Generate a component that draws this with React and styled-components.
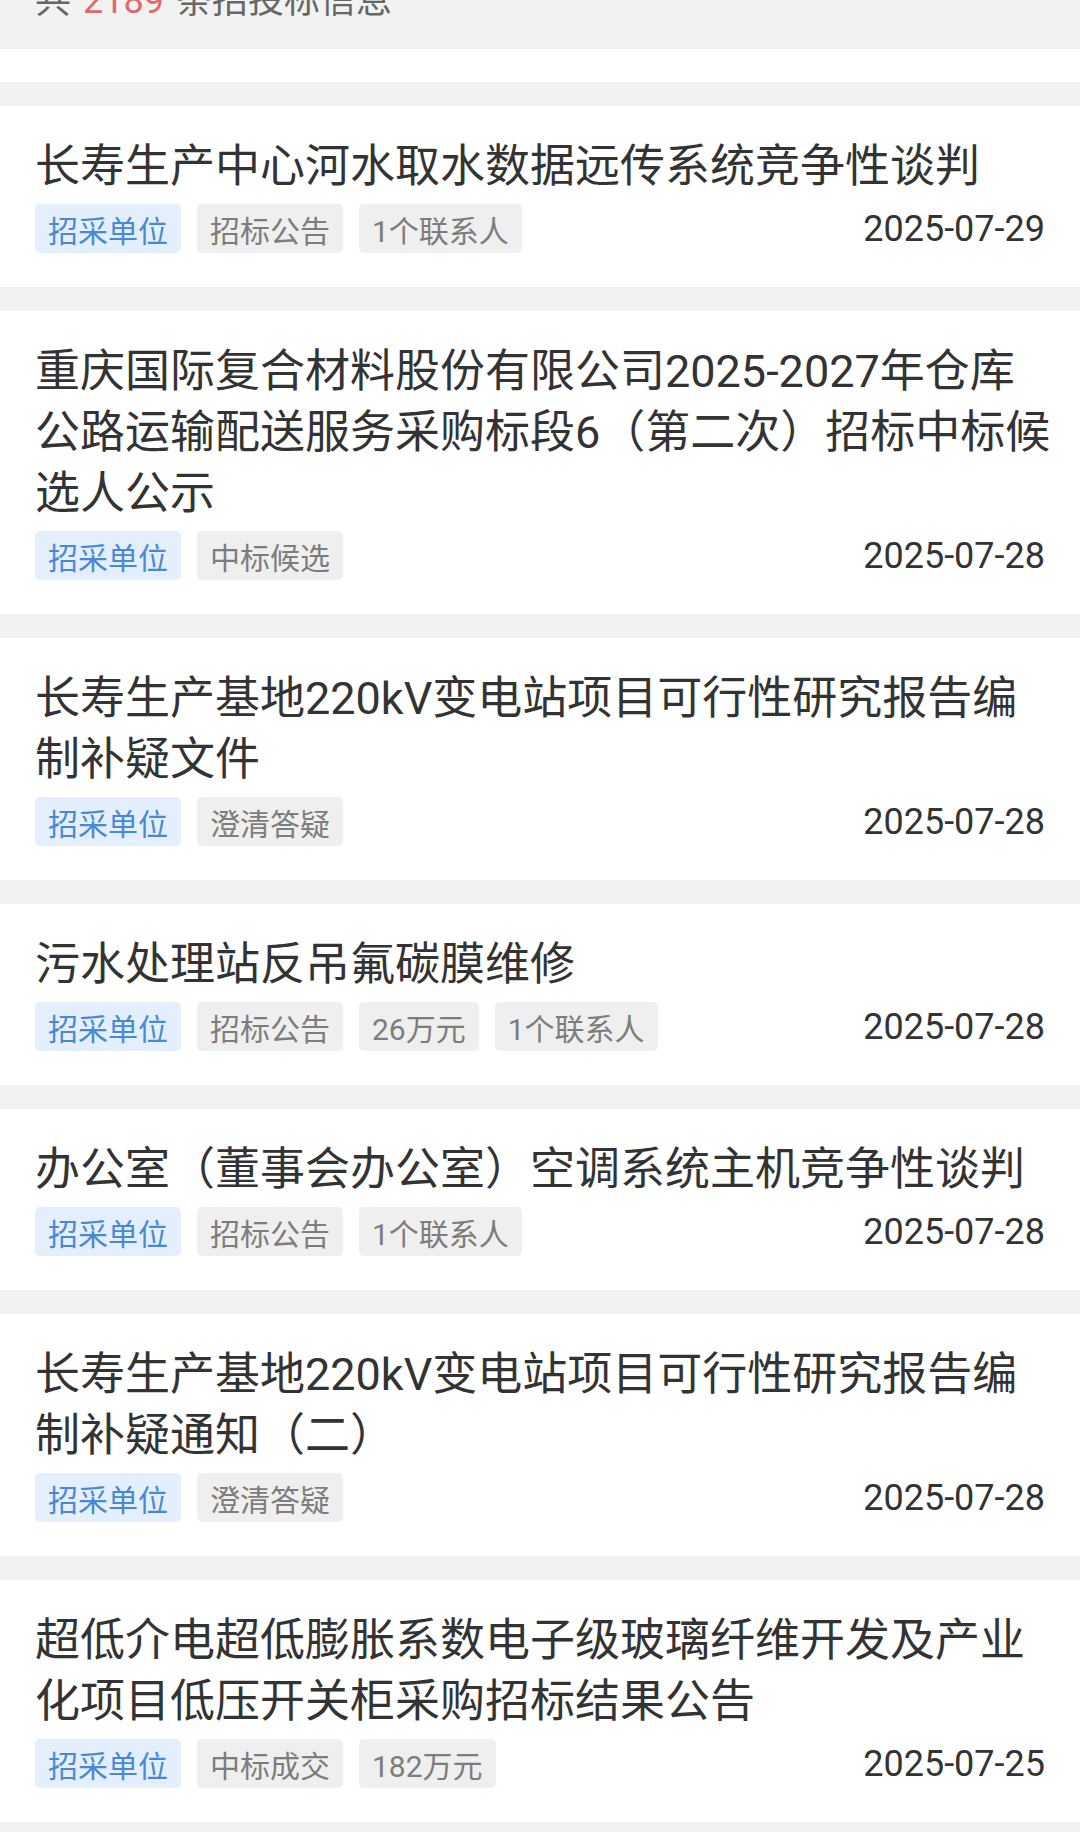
import React from "react";
import styled, { createGlobalStyle } from "styled-components";

const GlobalStyle = createGlobalStyle`
  html, body {
    margin: 0;
    padding: 0;
    background-color: #f2f2f2;
  }
  body {
    font-family: "Roboto", "Noto Sans CJK SC", sans-serif;
    color: #333333;
  }
  * {
    box-sizing: border-box;
  }
`;

const Page = styled.div`
  width: 1080px;
  min-height: 1832px;
  background-color: #f2f2f2;
`;

const Summary = styled.div`
  height: 49px;
  display: flex;
  align-items: flex-end;
  padding: 0 35px 30px;
  overflow: hidden;
  font-size: 36px;
  line-height: 36px;
  color: #666666;
  white-space: nowrap;
`;

const Count = styled.span`
  color: #e06a6a;
  margin: 0 12px;
`;

const Spacer = styled.div`
  height: 33px;
  background-color: #ffffff;
`;

const List = styled.div`
  display: flex;
  flex-direction: column;
  gap: 24px;
  padding-top: 24px;
`;

const Card = styled.div`
  background-color: #ffffff;
  padding: 30px 25px 34px 35px;
  display: flex;
  flex-direction: column;
  gap: 7px;
`;

const Title = styled.div`
  font-size: 45px;
  line-height: 61px;
  color: #333333;
`;

const MetaRow = styled.div`
  display: flex;
  align-items: center;
  justify-content: space-between;
  padding-right: 10px;
`;

const Tags = styled.div`
  display: flex;
  gap: 16px;
`;

const Tag = styled.span`
  display: inline-flex;
  align-items: center;
  height: 49px;
  padding: 0 13px;
  border-radius: 5px;
  font-size: 30px;
  background-color: ${props => (props.$primary ? "#e3effd" : "#efefef")};
  color: ${props => (props.$primary ? "#4a88d6" : "#7d7d7d")};
`;

const Date = styled.span`
  font-size: 36px;
  color: #333333;
`;

const items = [
  {
    title: "长寿生产中心河水取水数据远传系统竞争性谈判",
    tags: ["招标公告", "1个联系人"],
    date: "2025-07-29"
  },
  {
    title:
      "重庆国际复合材料股份有限公司2025-2027年仓库公路运输配送服务采购标段6（第二次）招标中标候选人公示",
    tags: ["中标候选"],
    date: "2025-07-28"
  },
  {
    title: "长寿生产基地220kV变电站项目可行性研究报告编制补疑文件",
    tags: ["澄清答疑"],
    date: "2025-07-28"
  },
  {
    title: "污水处理站反吊氟碳膜维修",
    tags: ["招标公告", "26万元", "1个联系人"],
    date: "2025-07-28"
  },
  {
    title: "办公室（董事会办公室）空调系统主机竞争性谈判",
    tags: ["招标公告", "1个联系人"],
    date: "2025-07-28"
  },
  {
    title: "长寿生产基地220kV变电站项目可行性研究报告编制补疑通知（二）",
    tags: ["澄清答疑"],
    date: "2025-07-28"
  },
  {
    title: "超低介电超低膨胀系数电子级玻璃纤维开发及产业化项目低压开关柜采购招标结果公告",
    tags: ["中标成交", "182万元"],
    date: "2025-07-25"
  }
];

const BidCard = ({ item }) => (
  <Card>
    <Title>{item.title}</Title>
    <MetaRow>
      <Tags>
        <Tag $primary>招采单位</Tag>
        {item.tags.map(t => (
          <Tag key={t}>{t}</Tag>
        ))}
      </Tags>
      <Date>{item.date}</Date>
    </MetaRow>
  </Card>
);

export default function App() {
  return (
    <Page>
      <GlobalStyle />
      <Summary>
        共<Count>2189</Count>条招投标信息
      </Summary>
      <Spacer />
      <List>
        {items.map((item, i) => (
          <BidCard key={i} item={item} />
        ))}
      </List>
    </Page>
  );
}
